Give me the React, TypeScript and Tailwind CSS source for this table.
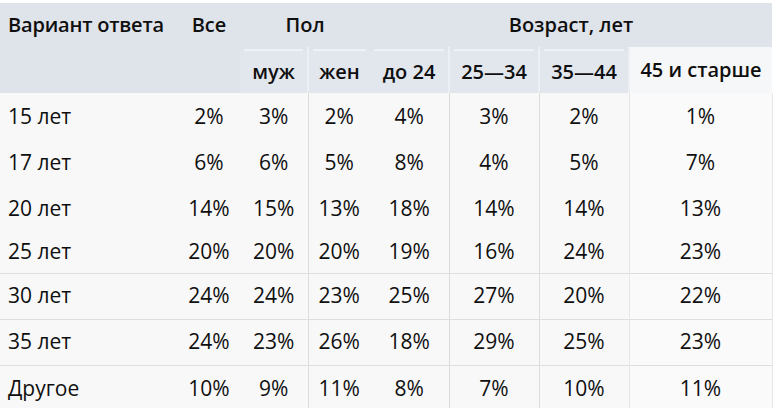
import React from 'react'

const rows: Array<{ label: string; values: string[]; h: string; line?: boolean }> = [
  { label: '15 лет', values: ['2%', '3%', '2%', '4%', '3%', '2%', '1%'], h: 'h-[47px]' },
  { label: '17 лет', values: ['6%', '6%', '5%', '8%', '4%', '5%', '7%'], h: 'h-[46px]' },
  { label: '20 лет', values: ['14%', '15%', '13%', '18%', '14%', '14%', '13%'], h: 'h-[45px]' },
  { label: '25 лет', values: ['20%', '20%', '20%', '19%', '16%', '24%', '23%'], h: 'h-[42px]' },
  { label: '30 лет', values: ['24%', '24%', '23%', '25%', '27%', '20%', '22%'], h: 'h-[46px]', line: true },
  { label: '35 лет', values: ['24%', '23%', '26%', '18%', '29%', '25%', '23%'], h: 'h-[46px]', line: true },
  { label: 'Другое', values: ['10%', '9%', '11%', '8%', '7%', '10%', '11%'], h: 'h-[46px]', line: true },
]

// value columns (0 = Все) that start with a vertical rule
const ruled = [2, 4, 5, 6]

const subHeads = ['муж', 'жен', 'до 24', '25—34', '35—44']

export default function App() {
  return (
    <div className="w-[776px] h-[408px] overflow-hidden bg-white pt-[3px] text-[#0f0f0f] font-['Open_Sans',sans-serif]">
      <table className="w-[772px] table-fixed border-collapse">
        <colgroup>
          <col className="w-[178px]" />
          <col className="w-[62px]" />
          <col className="w-[68px]" />
          <col className="w-[62px]" />
          <col className="w-[79px]" />
          <col className="w-[90px]" />
          <col className="w-[90px]" />
          <col className="w-[143px]" />
        </colgroup>
        <thead>
          <tr className="h-[44px] bg-[#dfe3ea] text-[20px]">
            <th className="pl-2 text-left font-semibold tracking-[-0.2px]">Вариант ответа</th>
            <th className="text-center font-semibold">Все</th>
            <th colSpan={2} className="text-center font-semibold">Пол</th>
            <th colSpan={4} className="text-center font-semibold">Возраст, лет</th>
          </tr>
          <tr className="h-[46px] bg-[#dfe3ea] text-[20px]">
            <th />
            <th />
            {subHeads.map((s, i) => (
              <th
                key={s}
                className={`p-0 font-semibold ${[1, 3, 4].includes(i) ? 'border-l-2 border-[#eceff3]' : ''}`}
              >
                <div className="flex h-[46px] flex-col">
                  <div className="mx-1 mt-[2px] h-[2px] bg-[#eef1f5]" />
                  <div className="flex flex-1 items-center justify-center bg-[#e2e6ed]">{s}</div>
                </div>
              </th>
            ))}
            <th className="border-l-2 border-[#eceff3] bg-[#f6f7f9] text-center font-semibold">45 и старше</th>
          </tr>
        </thead>
        <tbody className="bg-[#f8f8f8] text-[21px]">
          {rows.map((r) => (
            <tr key={r.label} className={`${r.h} ${r.line ? 'border-t border-[#dedede]' : ''}`}>
              <td className="pl-2 text-left">{r.label}</td>
              {r.values.map((v, i) => (
                <td
                  key={i}
                  className={`text-center ${ruled.includes(i) ? 'border-l border-[#dcdcdc]' : ''} ${
                    i === 6 ? 'border-r border-[#e6e6e6] bg-[#fafafa]' : ''
                  }`}
                >
                  {v}
                </td>
              ))}
            </tr>
          ))}
        </tbody>
      </table>
    </div>
  )
}
